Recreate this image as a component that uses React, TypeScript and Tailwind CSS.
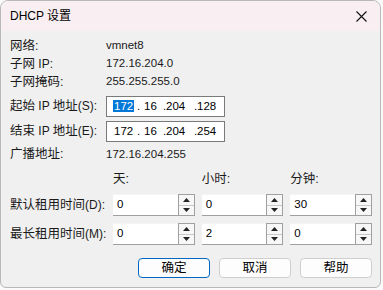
import React from "react";

const font = "font-['Segoe_UI','Liberation_Sans','Noto_Sans_CJK_SC',sans-serif]";

const SpinBox = ({ value }: { value: string }) => (
  <div className="flex h-[22px] flex-1">
    <div className="flex flex-1 items-center border-b border-b-[#a0a0a0] border-t border-t-[#f4f4f4] bg-white pl-[4px] text-[11.5px] text-black">
      {value}
    </div>
    <div className="flex w-[17px] flex-col border border-[#a0a0a0] bg-[#f7f7f7]">
      <div className="flex flex-1 items-center justify-center border-b border-[#c8c8c8]">
        <svg width="7" height="4" viewBox="0 0 7 4">
          <path d="M0 4 L3.5 0 L7 4 Z" fill="#222" />
        </svg>
      </div>
      <div className="flex flex-1 items-center justify-center">
        <svg width="7" height="4" viewBox="0 0 7 4">
          <path d="M0 0 L3.5 4 L7 0 Z" fill="#222" />
        </svg>
      </div>
    </div>
  </div>
);

const IpBox = ({ last, selected }: { last: string; selected?: boolean }) => (
  <div className="flex h-[21px] w-[119px] items-center border border-[#7a7a7a] bg-white pl-[6px] text-[11.5px] text-black">
    <span className="w-[24px]">
      <span className={selected ? "bg-[#0078d7] px-px text-white" : "px-px"}>172</span>
    </span>
    <span className="w-[7px]">.</span>
    <span className="w-[19px]">16</span>
    <span className="w-[3px]">.</span>
    <span className="w-[28px]">204</span>
    <span className="w-[3px]">.</span>
    <span>{last}</span>
  </div>
);

const Latin = ({ children }: { children: React.ReactNode }) => (
  <span className="text-[12px]">{children}</span>
);

export default function App() {
  return (
    <div className={`h-[290px] w-[383px] overflow-hidden bg-[#fafafa] ${font}`}>
      <div className="h-[288px] w-[381px] overflow-hidden rounded-t-[8px] rounded-b-[6px] border border-[#b8b8b8] bg-[#f0f0f0]">
        {/* title bar */}
        <div className="flex h-[30px] items-center justify-between bg-[#f9eef2] pl-[9px] pr-[9px]">
          <span className="text-[12px] text-black">DHCP 设置</span>
          <svg width="11" height="11" viewBox="0 0 11 11" className="mr-[4px]">
            <path d="M0.5 0.5 L10.5 10.5 M10.5 0.5 L0.5 10.5" stroke="#111" strokeWidth="1.1" />
          </svg>
        </div>

        <div className="pl-[9px] pr-[8px] pt-[6px] text-[12.5px] text-[#1a1a1a]">
          <div className="grid grid-cols-[96px_1fr] items-center">
            <div className="h-[18px] leading-[18px]">网络:</div>
            <div className="text-[11.5px]">vmnet8</div>
            <div className="h-[18px] leading-[18px]">子网<Latin> IP:</Latin></div>
            <div className="text-[11.5px]">172.16.204.0</div>
            <div className="h-[18px] leading-[18px]">子网掩码:</div>
            <div className="text-[11.5px]">255.255.255.0</div>
          </div>

          <div className="mt-[5px] grid grid-cols-[96px_1fr] items-center gap-y-[4px]">
            <div>起始<Latin> IP </Latin>地址<Latin>(S):</Latin></div>
            <IpBox last="128" selected />
            <div>结束<Latin> IP </Latin>地址<Latin>(E):</Latin></div>
            <IpBox last="254" />
          </div>

          <div className="mt-[3px] grid h-[18px] grid-cols-[96px_1fr] items-center">
            <div>广播地址:</div>
            <div className="text-[11.5px]">172.16.204.255</div>
          </div>

          <div className="mt-[8px] grid grid-cols-[96px_1fr_1fr_1fr] items-center gap-x-[7px] gap-y-[7px]">
            <div />
            <div className="h-[16px] leading-[16px]">天:</div>
            <div className="h-[16px] leading-[16px]">小时:</div>
            <div className="h-[16px] leading-[16px]">分钟:</div>

            <div className="-mr-[7px]">默认租用时间<Latin>(D):</Latin></div>
            <SpinBox value="0" />
            <SpinBox value="0" />
            <SpinBox value="30" />

            <div className="-mr-[7px]">最长租用时间<Latin>(M):</Latin></div>
            <SpinBox value="0" />
            <SpinBox value="2" />
            <SpinBox value="0" />
          </div>

          <div className="mt-[13px] flex justify-end gap-[9px]">
            <button className="h-[20px] w-[72px] rounded-[4px] border border-[#0067c0] bg-[#fdfdfd] text-[12.5px] leading-none text-black">
              确定
            </button>
            <button className="h-[20px] w-[72px] rounded-[4px] border border-[#cfcfcf] bg-[#fdfdfd] text-[12.5px] leading-none text-black">
              取消
            </button>
            <button className="h-[20px] w-[72px] rounded-[4px] border border-[#cfcfcf] bg-[#fdfdfd] text-[12.5px] leading-none text-black">
              帮助
            </button>
          </div>
        </div>
      </div>
    </div>
  );
}
